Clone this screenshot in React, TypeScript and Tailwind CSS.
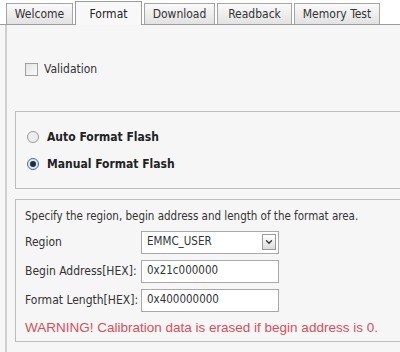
import { ChevronDown } from "lucide-react";

const tabs = [
  { label: "Welcome", w: "w-[67px]" },
  { label: "Format", w: "w-[67px]", active: true },
  { label: "Download", w: "w-[71px]" },
  { label: "Readback", w: "w-[75px]" },
  { label: "Memory Test", w: "w-[86px]" },
];

function Field({ label, value, combo }: { label: string; value: string; combo?: boolean }) {
  return (
    <div className="flex items-center h-[22px]">
      <span className="w-[116px] text-[12px] text-[#333]">{label}</span>
      <div className="w-[138px] h-[23px] border border-[#a9a9a9] bg-white flex items-center pl-[5px] pr-[2px] text-[11.5px] text-[#333]">
        <span className="flex-1">{value}</span>
        {combo && (
          <span className="w-[14px] h-[16px] border border-[#9a9a9a] bg-gradient-to-b from-white to-[#dcdcdc] flex items-center justify-center">
            <ChevronDown size={10} strokeWidth={3} className="text-[#333]" />
          </span>
        )}
      </div>
    </div>
  );
}

function Radio({ label, checked }: { label: string; checked?: boolean }) {
  return (
    <div className="flex items-center gap-[8px] h-[14px]">
      <span
        className={
          "w-[12px] h-[12px] rounded-full border flex items-center justify-center " +
          (checked ? "border-[#4a6b8a] bg-[#dfe8f0]" : "border-[#9a9a9a] bg-[#eeeeee]")
        }
      >
        {checked && <span className="w-[6px] h-[6px] rounded-full bg-[#1f2f3f]" />}
      </span>
      <span className="text-[12px] font-bold text-[#222]">{label}</span>
    </div>
  );
}

export default function App() {
  return (
    <div
      className="w-[400px] h-[352px] bg-[#f6f6f6] overflow-hidden flex flex-col"
      style={{ fontFamily: '"DejaVu Sans Condensed", "Liberation Sans", sans-serif' }}
    >
      {/* Tab strip */}
      <div className="flex items-end gap-[2px] pl-[6px] h-[25px] border-b border-[#9c9c9c] bg-white">
        {tabs.map((t) =>
          t.active ? (
            <div
              key={t.label}
              className={`${t.w} h-[24px] -mb-px bg-[#f8f8f8] border border-b-0 border-[#9c9c9c] flex items-center justify-center text-[12px] text-[#222]`}
            >
              {t.label}
            </div>
          ) : (
            <div
              key={t.label}
              className={`${t.w} h-[21px] bg-gradient-to-b from-[#fafafa] to-[#e2e2e2] border border-b-0 border-[#a5a5a5] flex items-center justify-center text-[12px] text-[#333]`}
            >
              {t.label}
            </div>
          )
        )}
      </div>

      {/* Panel */}
      <div className="flex-1 ml-[5px] border-l-2 border-[#cfcfcf] flex flex-col">
        {/* Validation */}
        <div className="h-[86px] flex items-center pl-[18px] pt-[2px] gap-[6px]">
          <span className="w-[13px] h-[13px] border border-[#a0a0a0] bg-gradient-to-br from-[#e4e4e4] to-[#fafafa]" />
          <span className="text-[12px] text-[#333]">Validation</span>
        </div>

        {/* Format type */}
        <div className="ml-[8px] h-[78px] border-y border-l border-[#bdbdbd] flex flex-col justify-center gap-[13px] pl-[11px]">
          <Radio label="Auto Format Flash" />
          <Radio label="Manual Format Flash" checked />
        </div>

        {/* Region settings */}
        <div className="ml-[8px] mt-[10px] h-[143px] border-y border-l border-[#bdbdbd] pl-[9px] pt-[8px] flex flex-col">
          <p className="text-[11.5px] text-[#333] leading-[16px]">
            Specify the region, begin address and length of the format area.
          </p>
          <div className="flex flex-col gap-[7px] mt-[7px]">
            <Field label="Region" value="EMMC_USER" combo />
            <Field label="Begin Address[HEX]:" value="0x21c000000" />
            <Field label="Format Length[HEX]:" value="0x400000000" />
          </div>
          <p className="mt-[7px] text-[13.5px] text-[#d8505a] font-['Liberation_Sans',sans-serif]">
            WARNING! Calibration data is erased if begin address is 0.
          </p>
        </div>
      </div>
    </div>
  );
}
